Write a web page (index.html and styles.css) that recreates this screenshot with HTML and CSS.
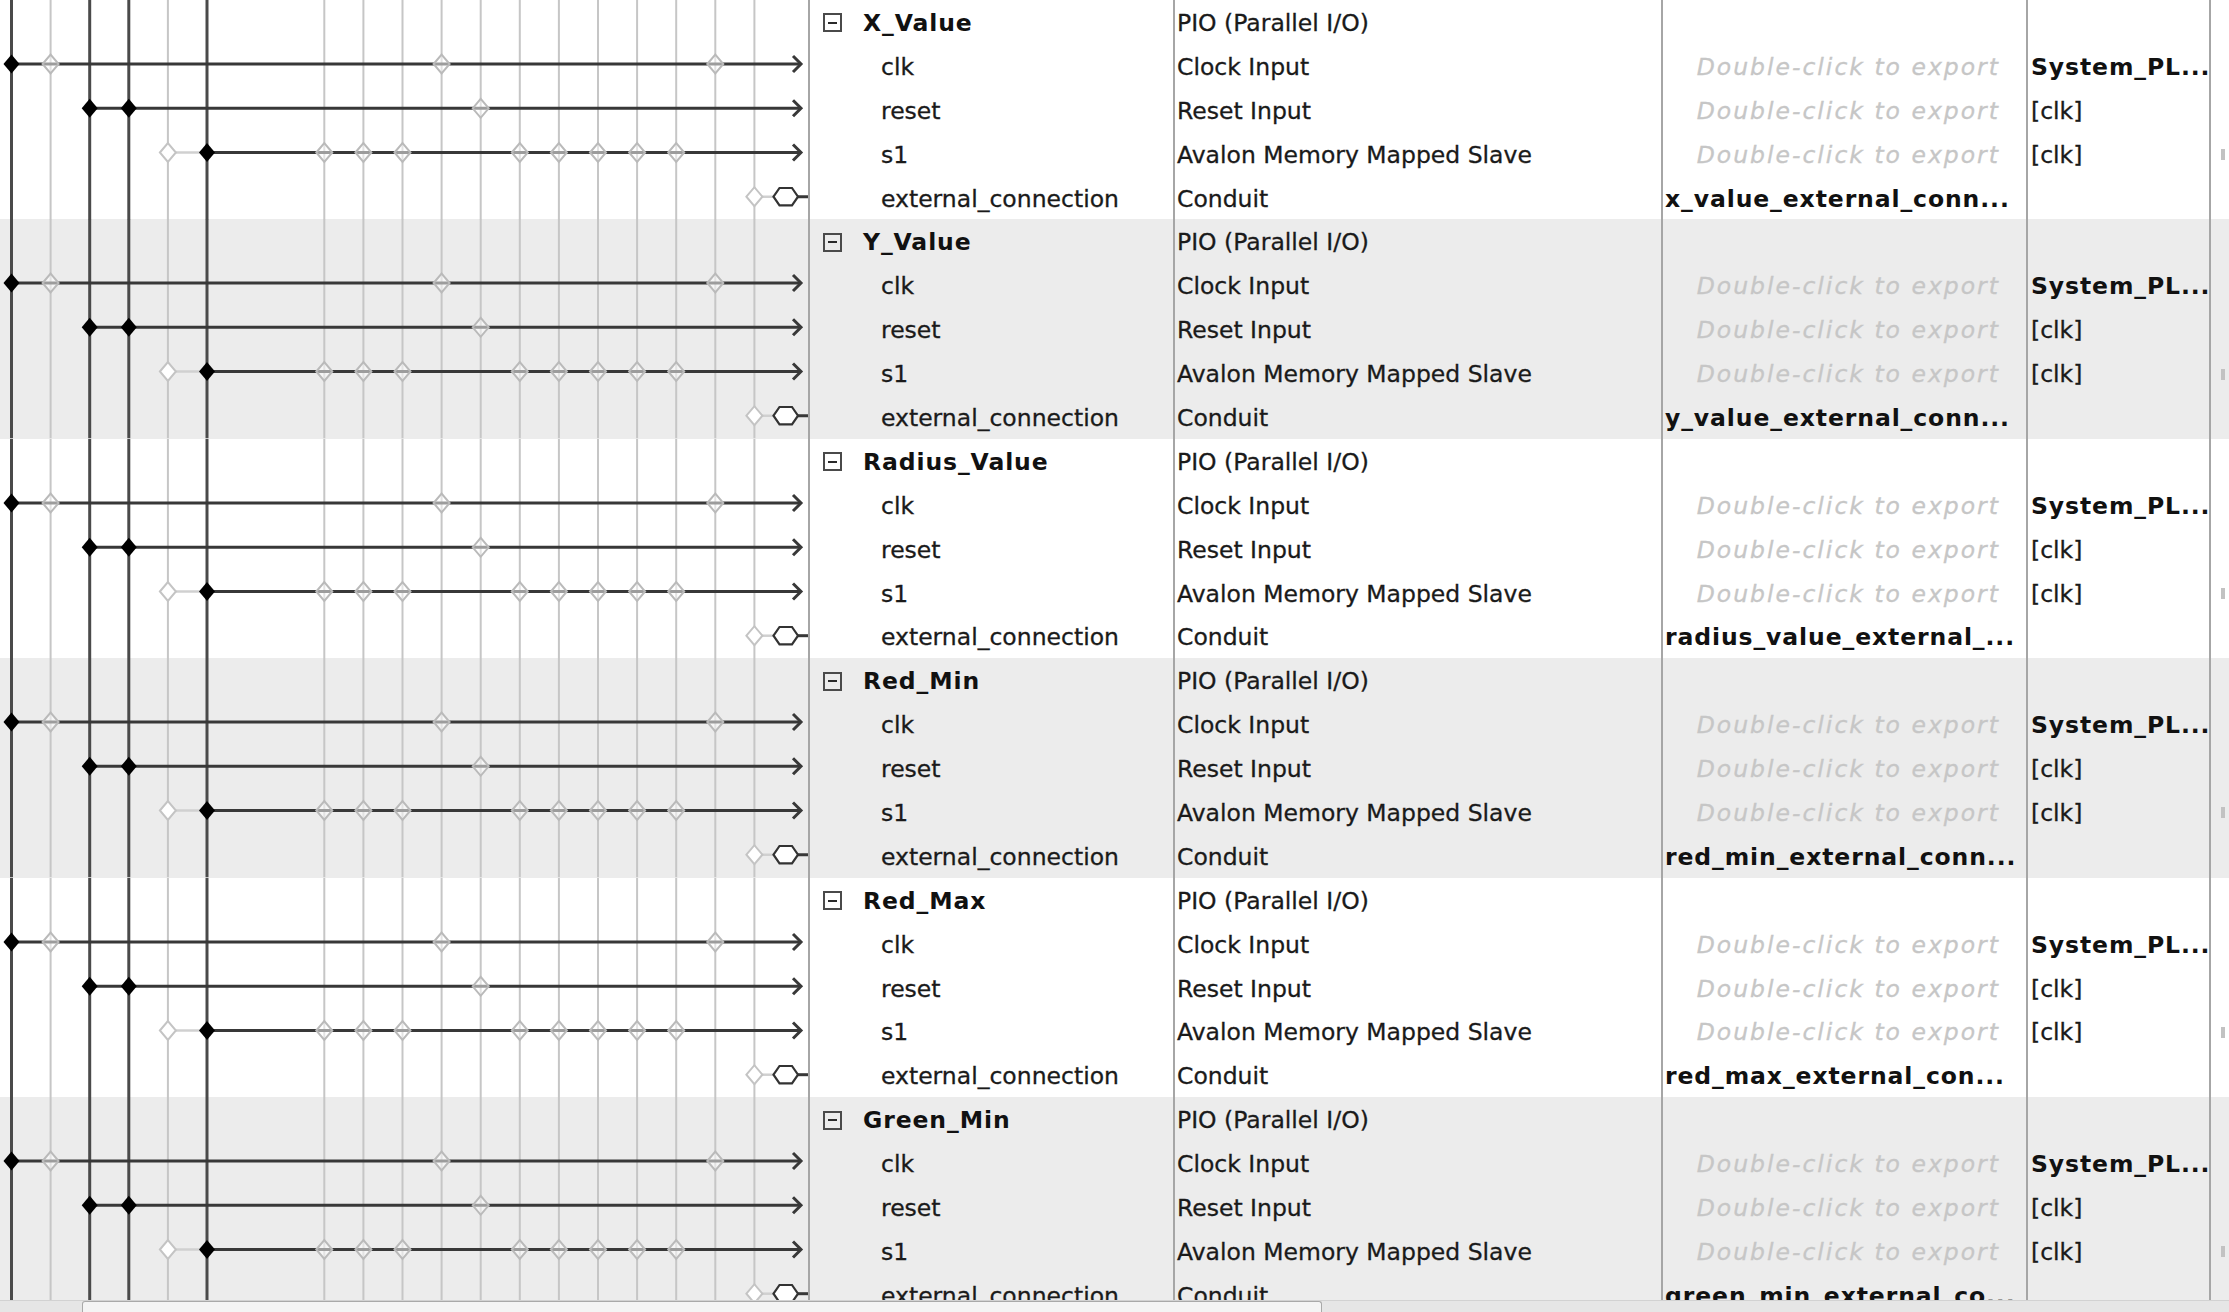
FILE: index.html
```html
<!DOCTYPE html>
<html>
<head>
<meta charset="utf-8">
<title>System Contents</title>
<link rel="stylesheet" href="styles.css">
</head>
<body>
<svg class="defs" width="0" height="0" aria-hidden="true">
  <defs>
    <path id="dm" d="M-8 0L0-9.5L8 0L0 9.5Z"/>
    <symbol id="conn" viewBox="0 0 808 219.5">
      <g stroke="#c6c6c6" stroke-width="2">
        <line x1="50.6" y1="0" x2="50.6" y2="219.5"/>
        <line x1="167.9" y1="0" x2="167.9" y2="219.5"/>
        <line x1="324.3" y1="0" x2="324.3" y2="219.5"/>
        <line x1="363.4" y1="0" x2="363.4" y2="219.5"/>
        <line x1="402.5" y1="0" x2="402.5" y2="219.5"/>
        <line x1="441.6" y1="0" x2="441.6" y2="219.5"/>
        <line x1="480.7" y1="0" x2="480.7" y2="219.5"/>
        <line x1="519.8" y1="0" x2="519.8" y2="219.5"/>
        <line x1="558.9" y1="0" x2="558.9" y2="219.5"/>
        <line x1="598" y1="0" x2="598" y2="219.5"/>
        <line x1="637.1" y1="0" x2="637.1" y2="219.5"/>
        <line x1="676.2" y1="0" x2="676.2" y2="219.5"/>
        <line x1="715.3" y1="0" x2="715.3" y2="219.5"/>
        <line x1="754.4" y1="0" x2="754.4" y2="219.5"/>
      </g>
      <g stroke="#4a4a4a" stroke-width="3">
        <line x1="11.5" y1="0" x2="11.5" y2="219.5"/>
        <line x1="89.7" y1="0" x2="89.7" y2="219.5"/>
        <line x1="128.8" y1="0" x2="128.8" y2="219.5"/>
        <line x1="207" y1="0" x2="207" y2="219.5"/>
      </g>
      <g stroke="#d0d0d0" stroke-width="2.5">
        <line x1="167.9" y1="152.5" x2="207" y2="152.5"/>
        <line x1="754.4" y1="196.7" x2="774" y2="196.7"/>
      </g>
      <g fill="none" stroke="#383838" stroke-width="3">
        <line x1="11.5" y1="64" x2="800" y2="64"/>
        <line x1="89.7" y1="108.3" x2="800" y2="108.3"/>
        <line x1="207" y1="152.5" x2="800" y2="152.5"/>
        <line x1="798" y1="196.7" x2="808" y2="196.7"/>
        <polyline points="793,56 801,64 793,72"/>
        <polyline points="793,100.3 801,108.3 793,116.3"/>
        <polyline points="793,144.5 801,152.5 793,160.5"/>
      </g>
      <polygon points="773.5,196.7 779.5,188 792,188 798,196.7 792,205.4 779.5,205.4" fill="#fff" stroke="#333" stroke-width="2.2"/>
      <g fill="rgba(255,255,255,0.5)" stroke="#bababa" stroke-width="2">
        <use href="#dm" x="50.6" y="64"/>
        <use href="#dm" x="441.6" y="64"/>
        <use href="#dm" x="715.3" y="64"/>
        <use href="#dm" x="480.7" y="108.3"/>
        <use href="#dm" x="324.3" y="152.5"/>
        <use href="#dm" x="363.4" y="152.5"/>
        <use href="#dm" x="402.5" y="152.5"/>
        <use href="#dm" x="519.8" y="152.5"/>
        <use href="#dm" x="558.9" y="152.5"/>
        <use href="#dm" x="598" y="152.5"/>
        <use href="#dm" x="637.1" y="152.5"/>
        <use href="#dm" x="676.2" y="152.5"/>
      </g>
      <g fill="#fff" stroke="#c4c4c4" stroke-width="2">
        <use href="#dm" x="167.9" y="152.5"/>
        <use href="#dm" x="754.4" y="196.7"/>
      </g>
      <g fill="#000">
        <use href="#dm" x="11.5" y="64"/>
        <use href="#dm" x="89.7" y="108.3"/>
        <use href="#dm" x="128.8" y="108.3"/>
        <use href="#dm" x="207" y="152.5"/>
      </g>
    </symbol>
  </defs>
</svg>

<div class="screen">
  <div class="table">

    <section class="group">
      <div class="diagram"><svg class="diag" viewBox="0 0 808 219.5"><use href="#conn"/></svg></div>
      <div class="cell name head"><span class="toggle"></span><b>X_Value</b></div>
      <div class="cell desc">PIO (Parallel I/O)</div>
      <div class="cell exp"></div>
      <div class="cell clock"></div>
      <div class="cell base"></div>
      <div class="cell name">clk</div>
      <div class="cell desc">Clock Input</div>
      <div class="cell exp hint">Double-click to export</div>
      <div class="cell clock"><b>System_PL...</b></div>
      <div class="cell base"></div>
      <div class="cell name">reset</div>
      <div class="cell desc">Reset Input</div>
      <div class="cell exp hint">Double-click to export</div>
      <div class="cell clock">[clk]</div>
      <div class="cell base"></div>
      <div class="cell name">s1</div>
      <div class="cell desc">Avalon Memory Mapped Slave</div>
      <div class="cell exp hint">Double-click to export</div>
      <div class="cell clock">[clk]</div>
      <div class="cell base"><span class="mark"></span></div>
      <div class="cell name">external_connection</div>
      <div class="cell desc">Conduit</div>
      <div class="cell exp"><b>x_value_external_conn...</b></div>
      <div class="cell clock"></div>
      <div class="cell base"></div>
    </section>

    <section class="group alt">
      <div class="diagram"><svg class="diag" viewBox="0 0 808 219.5"><use href="#conn"/></svg></div>
      <div class="cell name head"><span class="toggle"></span><b>Y_Value</b></div>
      <div class="cell desc">PIO (Parallel I/O)</div>
      <div class="cell exp"></div>
      <div class="cell clock"></div>
      <div class="cell base"></div>
      <div class="cell name">clk</div>
      <div class="cell desc">Clock Input</div>
      <div class="cell exp hint">Double-click to export</div>
      <div class="cell clock"><b>System_PL...</b></div>
      <div class="cell base"></div>
      <div class="cell name">reset</div>
      <div class="cell desc">Reset Input</div>
      <div class="cell exp hint">Double-click to export</div>
      <div class="cell clock">[clk]</div>
      <div class="cell base"></div>
      <div class="cell name">s1</div>
      <div class="cell desc">Avalon Memory Mapped Slave</div>
      <div class="cell exp hint">Double-click to export</div>
      <div class="cell clock">[clk]</div>
      <div class="cell base"><span class="mark"></span></div>
      <div class="cell name">external_connection</div>
      <div class="cell desc">Conduit</div>
      <div class="cell exp"><b>y_value_external_conn...</b></div>
      <div class="cell clock"></div>
      <div class="cell base"></div>
    </section>

    <section class="group">
      <div class="diagram"><svg class="diag" viewBox="0 0 808 219.5"><use href="#conn"/></svg></div>
      <div class="cell name head"><span class="toggle"></span><b>Radius_Value</b></div>
      <div class="cell desc">PIO (Parallel I/O)</div>
      <div class="cell exp"></div>
      <div class="cell clock"></div>
      <div class="cell base"></div>
      <div class="cell name">clk</div>
      <div class="cell desc">Clock Input</div>
      <div class="cell exp hint">Double-click to export</div>
      <div class="cell clock"><b>System_PL...</b></div>
      <div class="cell base"></div>
      <div class="cell name">reset</div>
      <div class="cell desc">Reset Input</div>
      <div class="cell exp hint">Double-click to export</div>
      <div class="cell clock">[clk]</div>
      <div class="cell base"></div>
      <div class="cell name">s1</div>
      <div class="cell desc">Avalon Memory Mapped Slave</div>
      <div class="cell exp hint">Double-click to export</div>
      <div class="cell clock">[clk]</div>
      <div class="cell base"><span class="mark"></span></div>
      <div class="cell name">external_connection</div>
      <div class="cell desc">Conduit</div>
      <div class="cell exp"><b>radius_value_external_...</b></div>
      <div class="cell clock"></div>
      <div class="cell base"></div>
    </section>

    <section class="group alt">
      <div class="diagram"><svg class="diag" viewBox="0 0 808 219.5"><use href="#conn"/></svg></div>
      <div class="cell name head"><span class="toggle"></span><b>Red_Min</b></div>
      <div class="cell desc">PIO (Parallel I/O)</div>
      <div class="cell exp"></div>
      <div class="cell clock"></div>
      <div class="cell base"></div>
      <div class="cell name">clk</div>
      <div class="cell desc">Clock Input</div>
      <div class="cell exp hint">Double-click to export</div>
      <div class="cell clock"><b>System_PL...</b></div>
      <div class="cell base"></div>
      <div class="cell name">reset</div>
      <div class="cell desc">Reset Input</div>
      <div class="cell exp hint">Double-click to export</div>
      <div class="cell clock">[clk]</div>
      <div class="cell base"></div>
      <div class="cell name">s1</div>
      <div class="cell desc">Avalon Memory Mapped Slave</div>
      <div class="cell exp hint">Double-click to export</div>
      <div class="cell clock">[clk]</div>
      <div class="cell base"><span class="mark"></span></div>
      <div class="cell name">external_connection</div>
      <div class="cell desc">Conduit</div>
      <div class="cell exp"><b>red_min_external_conn...</b></div>
      <div class="cell clock"></div>
      <div class="cell base"></div>
    </section>

    <section class="group">
      <div class="diagram"><svg class="diag" viewBox="0 0 808 219.5"><use href="#conn"/></svg></div>
      <div class="cell name head"><span class="toggle"></span><b>Red_Max</b></div>
      <div class="cell desc">PIO (Parallel I/O)</div>
      <div class="cell exp"></div>
      <div class="cell clock"></div>
      <div class="cell base"></div>
      <div class="cell name">clk</div>
      <div class="cell desc">Clock Input</div>
      <div class="cell exp hint">Double-click to export</div>
      <div class="cell clock"><b>System_PL...</b></div>
      <div class="cell base"></div>
      <div class="cell name">reset</div>
      <div class="cell desc">Reset Input</div>
      <div class="cell exp hint">Double-click to export</div>
      <div class="cell clock">[clk]</div>
      <div class="cell base"></div>
      <div class="cell name">s1</div>
      <div class="cell desc">Avalon Memory Mapped Slave</div>
      <div class="cell exp hint">Double-click to export</div>
      <div class="cell clock">[clk]</div>
      <div class="cell base"><span class="mark"></span></div>
      <div class="cell name">external_connection</div>
      <div class="cell desc">Conduit</div>
      <div class="cell exp"><b>red_max_external_con...</b></div>
      <div class="cell clock"></div>
      <div class="cell base"></div>
    </section>

    <section class="group alt">
      <div class="diagram"><svg class="diag" viewBox="0 0 808 219.5"><use href="#conn"/></svg></div>
      <div class="cell name head"><span class="toggle"></span><b>Green_Min</b></div>
      <div class="cell desc">PIO (Parallel I/O)</div>
      <div class="cell exp"></div>
      <div class="cell clock"></div>
      <div class="cell base"></div>
      <div class="cell name">clk</div>
      <div class="cell desc">Clock Input</div>
      <div class="cell exp hint">Double-click to export</div>
      <div class="cell clock"><b>System_PL...</b></div>
      <div class="cell base"></div>
      <div class="cell name">reset</div>
      <div class="cell desc">Reset Input</div>
      <div class="cell exp hint">Double-click to export</div>
      <div class="cell clock">[clk]</div>
      <div class="cell base"></div>
      <div class="cell name">s1</div>
      <div class="cell desc">Avalon Memory Mapped Slave</div>
      <div class="cell exp hint">Double-click to export</div>
      <div class="cell clock">[clk]</div>
      <div class="cell base"><span class="mark"></span></div>
      <div class="cell name">external_connection</div>
      <div class="cell desc">Conduit</div>
      <div class="cell exp"><b>green_min_external_co...</b></div>
      <div class="cell clock"></div>
      <div class="cell base"></div>
    </section>

  </div>
  <div class="hscroll"><div class="thumb"></div></div>
</div>
</body>
</html>
```

FILE: styles.css
```css
* { box-sizing: border-box; }

html, body {
  margin: 0;
  padding: 0;
  background: #ffffff;
  overflow: hidden;
}

body {
  font-family: "DejaVu Sans", "Liberation Sans", sans-serif;
  font-size: 23.5px;
  color: #1a1a1a;
}

.defs {
  display: block;
  width: 0;
  height: 0;
  overflow: hidden;
}

.screen {
  width: 2229px;
  height: 1312px;
  display: flex;
  flex-direction: column;
}

.table {
  flex: 1 1 auto;
  min-height: 0;
  overflow: hidden;
}

.group {
  display: grid;
  grid-template-columns: 810px 365px 488px 365px 183px 1fr;
  grid-template-rows: repeat(5, 43.9px);
  background: #ffffff;
}

.group.alt {
  background: #ececec;
}

.diagram {
  grid-column: 1;
  grid-row: 1 / span 5;
  border-right: 2px solid #a6a6a6;
}

.diag {
  display: block;
  width: 808px;
  height: 219.5px;
}

.cell {
  display: flex;
  align-items: center;
  white-space: nowrap;
  overflow: hidden;
  padding-top: 2px;
  border-right: 2px solid #a6a6a6;
  -webkit-text-stroke: 0.3px currentColor;
}

.cell b {
  font-weight: bold;
  color: #111111;
  letter-spacing: 0.9px;
  -webkit-text-stroke: 0;
}

.name {
  padding-left: 71px;
}

.name.head {
  padding-left: 13px;
}

.toggle {
  position: relative;
  flex: 0 0 auto;
  width: 19px;
  height: 19px;
  border: 2px solid #4a4a4a;
  margin-right: 21px;
}

.toggle::after {
  content: "";
  position: absolute;
  left: 3px;
  right: 3px;
  top: 6.5px;
  height: 2px;
  background: #2a2a2a;
}

.desc {
  padding-left: 2px;
}

.exp {
  padding-left: 2px;
}

.exp.hint {
  justify-content: flex-end;
  padding-right: 26px;
  font-style: italic;
  color: #c6c6c6;
  letter-spacing: 2px;
}

.clock {
  padding-left: 3px;
}

.base {
  border-right: none;
  padding-left: 10px;
}

.mark {
  display: block;
  width: 4px;
  height: 11px;
  background: #c2c2c2;
}

.hscroll {
  flex: 0 0 12px;
  height: 12px;
  background: #e6e6e6;
  border-top: 1px solid #d2d2d2;
  padding-left: 82px;
}

.thumb {
  width: 1240px;
  height: 100%;
  background: #f4f4f4;
  border: 1px solid #a9a9a9;
  border-bottom: none;
  border-radius: 3px 3px 0 0;
}
```
